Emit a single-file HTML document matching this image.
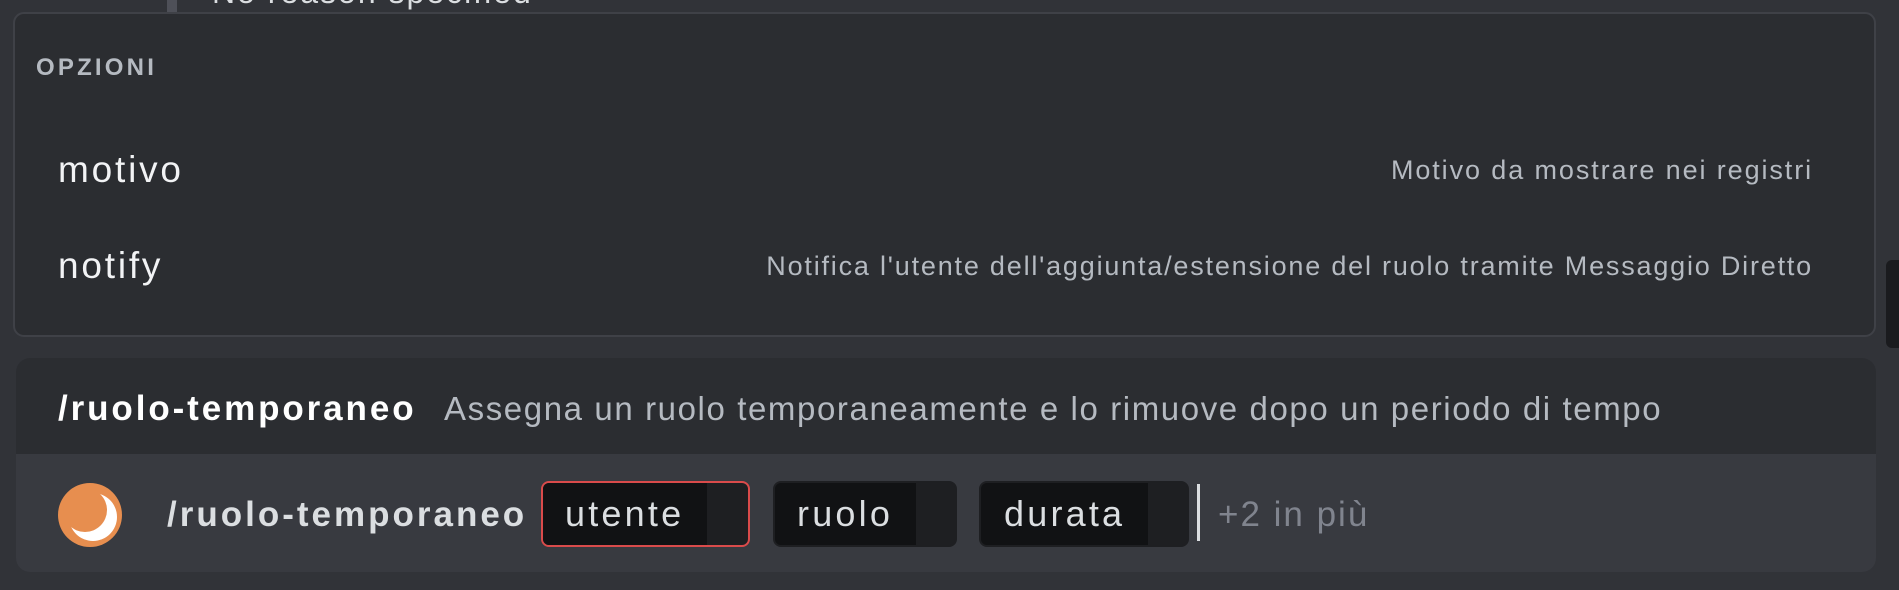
<!DOCTYPE html>
<html><head><meta charset="utf-8"><style>
*{margin:0;padding:0;box-sizing:border-box}
body{width:1899px;height:590px;background:#313338;position:relative;overflow:hidden;font-family:"Liberation Sans",sans-serif}
.a{position:absolute;white-space:nowrap}
.opt{left:13px;top:12px;width:1863px;height:325px;background:#2b2d31;border:2px solid #3f4147;border-radius:11px}
.pill{position:absolute;top:481px;height:66px;border-radius:8px;background:#1e1f22;overflow:hidden}
.pill .in{position:absolute;left:0;top:0;bottom:0;background:#111214;color:#dbdee1;font-size:36px;letter-spacing:3.2px}
</style></head><body>
<div class="a" style="left:167px;top:0;width:10px;height:12px;background:#4e5058"></div>
<div class="a" style="left:212px;top:-26px;font-size:32px;color:#dbdee1;letter-spacing:2px">No reason specified</div>
<div class="a opt"></div>
<div class="a" style="left:36px;top:54px;font-size:24px;font-weight:bold;color:#b5bac1;letter-spacing:3.2px">OPZIONI</div>
<div class="a" style="left:58px;top:149px;font-size:37px;color:#f2f3f5;letter-spacing:2.8px">motivo</div>
<div class="a" style="left:58px;top:245px;font-size:37px;color:#f2f3f5;letter-spacing:2.8px">notify</div>
<div class="a" style="right:86px;top:155px;font-size:27px;color:#b5bac1;letter-spacing:1.9px">Motivo da mostrare nei registri</div>
<div class="a" style="right:86px;top:251px;font-size:27px;color:#b5bac1;letter-spacing:1.8px">Notifica l'utente dell'aggiunta/estensione del ruolo tramite Messaggio Diretto</div>
<div class="a" style="left:16px;top:358px;width:1860px;height:214px;border-radius:14px;background:#383a40;overflow:hidden">
 <div style="height:96px;background:#2b2d31"></div>
</div>
<div class="a" style="left:58px;top:389px;font-size:35px;font-weight:bold;color:#fff;letter-spacing:2.9px">/ruolo-temporaneo</div>
<div class="a" style="left:444px;top:390px;font-size:33px;color:#b5bac1;letter-spacing:1.6px">Assegna un ruolo temporaneamente e lo rimuove dopo un periodo di tempo</div>
<svg class="a" style="left:58px;top:483px" width="64" height="64" viewBox="0 0 64 64">
<circle cx="32" cy="32" r="32" fill="#e78e4f"/>
<circle cx="35" cy="34" r="24" fill="#fff"/>
<circle cx="27" cy="27" r="22" fill="#e78e4f"/>
</svg>
<div class="a" style="left:167px;top:495px;font-size:35px;font-weight:bold;color:#dbdee1;letter-spacing:3px">/ruolo-temporaneo</div>
<div class="pill" style="left:541px;width:209px;border:2px solid #da4b4b"><div class="in" style="width:164px;line-height:62px;padding-left:22px">utente</div></div>
<div class="pill" style="left:773px;width:184px;border:2px solid #1e1f22"><div class="in" style="width:141px;line-height:62px;padding-left:22px">ruolo</div></div>
<div class="pill" style="left:979px;width:210px;border:2px solid #1e1f22"><div class="in" style="width:167px;line-height:62px;padding-left:23px">durata</div></div>
<div class="a" style="left:1197px;top:484px;width:3px;height:57px;background:#dbdee1"></div>
<div class="a" style="left:1218px;top:495px;font-size:35px;color:#80848e;letter-spacing:2px">+2 in più</div>
<div class="a" style="left:1886px;top:260px;width:13px;height:88px;background:#1a1b1e;border-radius:6px 0 0 6px"></div>
</body></html>
